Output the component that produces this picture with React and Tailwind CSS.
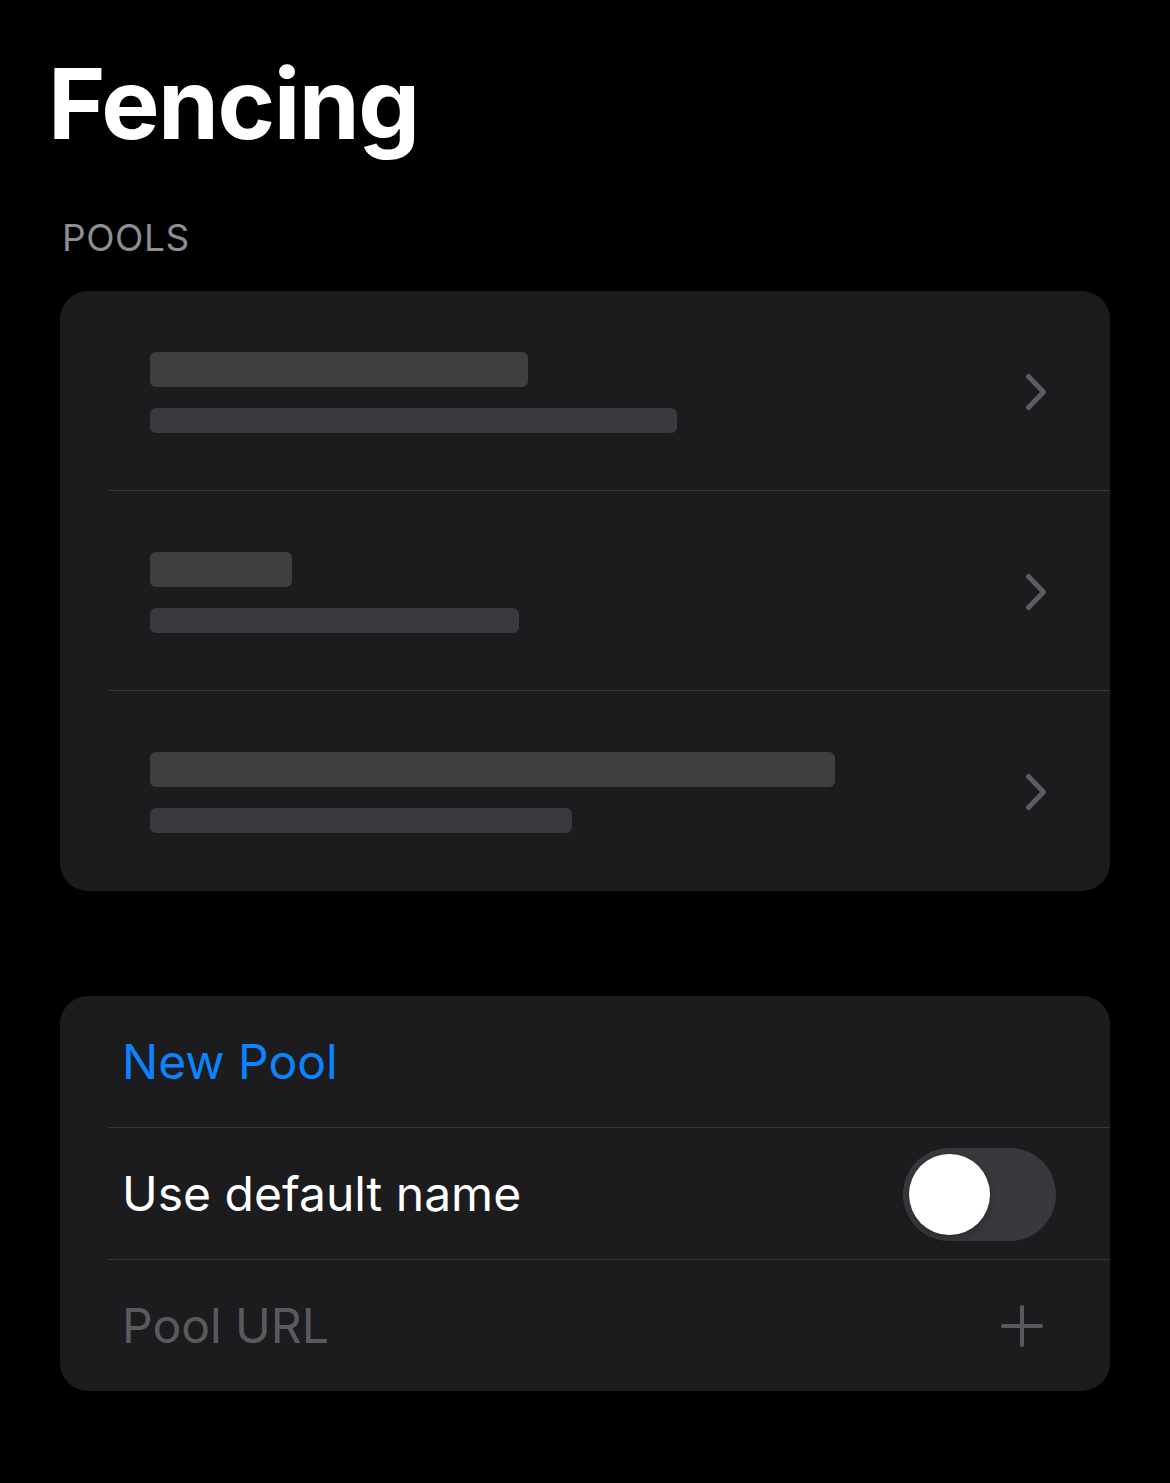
import React from "react";

function Chevron() {
  return (
    <svg width="24" height="40" viewBox="0 0 24 40" fill="none">
      <path d="M4.5 4.5 L19.5 20 L4.5 35.5" stroke="#5b5b60" strokeWidth="5" strokeLinecap="round" strokeLinejoin="round" />
    </svg>
  );
}

function SkeletonRow({ w1, w2, last }) {
  return (
    <div className="relative h-[200px] flex items-center">
      <div className="flex-1 pl-[90px] pt-[2px] flex flex-col gap-[21px]">
        <div className="h-[35px] rounded-[6px] bg-[#3f3f42]" style={{ width: w1 }} />
        <div className="h-[25px] rounded-[6px] bg-[#3a3a3e]" style={{ width: w2 }} />
      </div>
      <div className="pr-[62px] pt-[2px]">
        <Chevron />
      </div>
      {!last && <div className="absolute left-[48px] right-0 bottom-0 h-px bg-[#38383a]" />}
    </div>
  );
}

export default function App() {
  return (
    <div
      className="min-h-[1483px] w-[1170px] bg-black text-white"
      style={{ fontFamily: "Inter, 'Noto Sans', sans-serif" }}
    >
      <div className="pt-[44px] pl-[48px]">
        <h1 className="text-[98px] leading-[120px] font-bold tracking-[-1.5px]">Fencing</h1>
      </div>
      <div className="pl-[62px] pt-[52px] text-[37px] leading-[44px] text-[#8d8d93] tracking-[0.6px]">POOLS</div>
      <div className="mx-[60px] mt-[31px] rounded-[28px] bg-[#1c1c1e] overflow-hidden">
        <SkeletonRow w1={378} w2={527} />
        <SkeletonRow w1={142} w2={369} />
        <SkeletonRow w1={685} w2={422} last />
      </div>
      <div className="mx-[60px] mt-[105px] rounded-[28px] bg-[#1c1c1e] overflow-hidden">
        <div className="relative h-[132px] flex items-center pl-[62px]">
          <span className="text-[48px] text-[#0a84ff]">New Pool</span>
          <div className="absolute left-[48px] right-0 bottom-0 h-px bg-[#38383a]" />
        </div>
        <div className="relative h-[132px] flex items-center justify-between pl-[62px] pr-[54px]">
          <span className="text-[48px] text-white">Use default name</span>
          <div className="w-[153px] h-[93px] rounded-full bg-[#39393d] p-[6px] flex items-center">
            <div className="w-[81px] h-[81px] rounded-full bg-white shadow-[0_3px_8px_rgba(0,0,0,0.25)]" />
          </div>
          <div className="absolute left-[48px] right-0 bottom-0 h-px bg-[#38383a]" />
        </div>
        <div className="h-[131px] flex items-center justify-between pl-[62px] pr-[66px]">
          <span className="text-[48px] text-[#5a5a5e]">Pool URL</span>
          <svg width="44" height="44" viewBox="0 0 44 44" fill="none">
            <path d="M22 3 V41 M3 22 H41" stroke="#5a5a5e" strokeWidth="4" strokeLinecap="round" />
          </svg>
        </div>
      </div>
    </div>
  );
}
